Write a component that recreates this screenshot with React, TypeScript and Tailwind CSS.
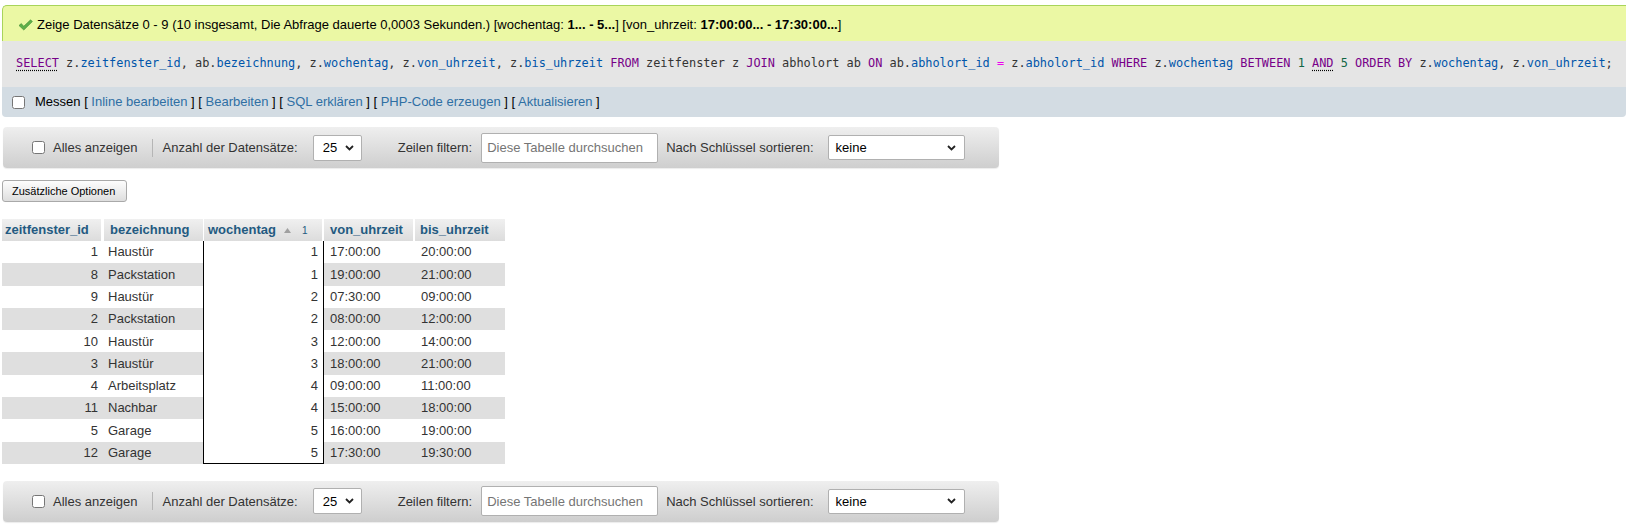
import React from "react";

const rows: [number, string, number, string, string][] = [
  [1, "Haustür", 1, "17:00:00", "20:00:00"],
  [8, "Packstation", 1, "19:00:00", "21:00:00"],
  [9, "Haustür", 2, "07:30:00", "09:00:00"],
  [2, "Packstation", 2, "08:00:00", "12:00:00"],
  [10, "Haustür", 3, "12:00:00", "14:00:00"],
  [3, "Haustür", 3, "18:00:00", "21:00:00"],
  [4, "Arbeitsplatz", 4, "09:00:00", "11:00:00"],
  [11, "Nachbar", 4, "15:00:00", "18:00:00"],
  [5, "Garage", 5, "16:00:00", "19:00:00"],
  [12, "Garage", 5, "17:30:00", "19:30:00"],
];

function Chevron() {
  return (
    <svg width="9" height="6" viewBox="0 0 9 6" className="shrink-0">
      <path d="M1 1 L4.5 4.5 L8 1" fill="none" stroke="#222" strokeWidth="1.8" />
    </svg>
  );
}

function NavBar() {
  return (
    <div className="ml-[3px] w-[996px] h-[41px] rounded-[4px] bg-gradient-to-b from-[#efefef] to-[#cecece] flex items-center text-[13px] text-[#333] shadow-[0_1px_1px_rgba(0,0,0,0.08)]">
      <input type="checkbox" className="ml-[29px] w-[13px] h-[13px]" />
      <span className="ml-[8px]">Alles anzeigen</span>
      <div className="ml-[14px] w-px h-[18px] bg-[#b5b5b5]" />
      <span className="ml-[10px]">Anzahl der Datensätze:</span>
      <div className="ml-[15px] w-[49px] h-[26px] bg-white border border-[#b0b0b0] rounded-[2px] flex items-center justify-between pl-[9px] pr-[7px] text-black">
        <span>25</span>
        <Chevron />
      </div>
      <span className="ml-[36px]">Zeilen filtern:</span>
      <div className="ml-[9px] w-[177px] h-[30px] bg-white border border-[#b0b0b0] rounded-[2px] flex items-center pl-[5px] text-[#757575]">
        Diese Tabelle durchsuchen
      </div>
      <span className="ml-[8px]">Nach Schlüssel sortieren:</span>
      <div className="ml-[14px] w-[137px] h-[25px] bg-white border border-[#b0b0b0] rounded-[2px] flex items-center justify-between pl-[7px] pr-[8px] text-black">
        <span>keine</span>
        <Chevron />
      </div>
    </div>
  );
}

const K = "text-[#770088]";
const V = "text-[#0055aa]";
const N = "text-[#116644]";

export default function App() {
  return (
    <div className="w-[1626px] h-[526px] bg-white pt-[5px] font-['Liberation_Sans',Arial,sans-serif] text-[13px] text-[#333] overflow-hidden">
      {/* success message */}
      <div className="ml-[2px] h-[36px] border-t border-l border-[#a8d45a] rounded-tl-[5px] bg-[#ebf8a4] flex items-center pl-[15px] pt-[2px] text-black">
        <svg width="15" height="12" viewBox="0 0 15 12" className="mr-[4px] shrink-0">
          <path d="M1 6.5 L3.2 4.6 L5.8 7.2 L12.6 0.8 L14.4 2.6 L5.8 11 Z" fill="#5fb04a" stroke="#3f8a32" strokeWidth="0.6" />
        </svg>
        <span>
          Zeige Datensätze 0 - 9 (10 insgesamt, Die Abfrage dauerte 0,0003 Sekunden.) [wochentag: <b>1... - 5...</b>] [von_uhrzeit: <b>17:00:00... - 17:30:00...</b>]
        </span>
      </div>
      {/* SQL */}
      <div className="ml-[2px] h-[46px] bg-[#e5e5e5] flex items-center pl-[14px] font-['DejaVu_Sans_Mono',monospace] text-[11.9px] text-[#333] whitespace-pre">
        <span className={`${K} underline decoration-dotted decoration-black underline-offset-[3px]`}>SELECT</span>
        <span> z.<span className={V}>zeitfenster_id</span>, ab.<span className={V}>bezeichnung</span>, z.<span className={V}>wochentag</span>, z.<span className={V}>von_uhrzeit</span>, z.<span className={V}>bis_uhrzeit</span> </span>
        <span className={K}>FROM</span>
        <span> zeitfenster z </span>
        <span className={K}>JOIN</span>
        <span> abholort ab </span>
        <span className={K}>ON</span>
        <span> ab.<span className={V}>abholort_id</span> <span className="text-[#ee00ee]">=</span> z.<span className={V}>abholort_id</span> </span>
        <span className={K}>WHERE</span>
        <span> z.<span className={V}>wochentag</span> </span>
        <span className={K}>BETWEEN</span>
        <span> <span className={N}>1</span> </span>
        <span className={`${K} underline decoration-dotted decoration-black underline-offset-[3px]`}>AND</span>
        <span> <span className={N}>5</span> </span>
        <span className={K}>ORDER BY</span>
        <span> z.<span className={V}>wochentag</span>, z.<span className={V}>von_uhrzeit</span>;</span>
      </div>
      {/* Messen bar */}
      <div className="ml-[2px] h-[30px] bg-[#d3dce3] rounded-b-[4px] flex items-center pl-[10px] text-black">
        <input type="checkbox" className="w-[13px] h-[13px]" />
        <span className="ml-[10px]">
          Messen [ <span className="text-[#2f6fa3]">Inline bearbeiten</span> ] [ <span className="text-[#2f6fa3]">Bearbeiten</span> ] [ <span className="text-[#2f6fa3]">SQL erklären</span> ] [ <span className="text-[#2f6fa3]">PHP-Code erzeugen</span> ] [ <span className="text-[#2f6fa3]">Aktualisieren</span> ]
        </span>
      </div>

      <div className="mt-[10px]">
        <NavBar />
      </div>

      {/* button */}
      <div className="mt-[12px] ml-[2px] w-[125px] h-[22px] border border-[#a9a9a9] rounded-[3px] bg-gradient-to-b from-[#fdfdfd] to-[#dedede] flex items-center pl-[9px] text-[11px] text-black">
        Zusätzliche Optionen
      </div>

      {/* table */}
      <div className="mt-[17px] ml-[2px] w-[503px]">
        <div className="flex h-[22px] text-[#235a81] font-bold">
          <div className="w-[101px] border-r-2 border-white bg-gradient-to-b from-[#f0f0f0] to-[#dcdcdc] flex items-center pl-[3px]">zeitfenster_id</div>
          <div className="w-[100px] border-l border-white bg-gradient-to-b from-[#f0f0f0] to-[#dcdcdc] flex items-center pl-[6px]">bezeichnung</div>
          <div className="w-[121px] border-l border-r-2 border-white bg-gradient-to-b from-[#f0f0f0] to-[#dcdcdc] flex items-center pl-[4px]">
            <span>wochentag</span>
            <svg width="7" height="5" viewBox="0 0 7 5" className="ml-[8px]">
              <path d="M0 5 L3.5 0 L7 5 Z" fill="#a0a0a0" />
            </svg>
            <span className="ml-[11px] text-[10px] font-normal">1</span>
          </div>
          <div className="w-[91px] border-r-2 border-white bg-gradient-to-b from-[#f0f0f0] to-[#dcdcdc] flex items-center pl-[6px]">von_uhrzeit</div>
          <div className="w-[90px] bg-gradient-to-b from-[#f0f0f0] to-[#dcdcdc] flex items-center pl-[5px]">bis_uhrzeit</div>
        </div>
        {rows.map((r, i) => (
          <div key={i} className={`flex h-[22.3px] ${i % 2 ? "bg-[#dfdfdf]" : "bg-white"}`}>
            <div className="w-[101px] flex items-center justify-end pr-[5px]">{r[0]}</div>
            <div className="w-[100px] flex items-center pl-[5px]">{r[1]}</div>
            <div className={`w-[121px] bg-white border-l border-r border-black flex items-center justify-end pr-[5px] ${i === rows.length - 1 ? "border-b" : ""}`}>{r[2]}</div>
            <div className="w-[91px] flex items-center pl-[6px]">{r[3]}</div>
            <div className="w-[90px] flex items-center pl-[6px]">{r[4]}</div>
          </div>
        ))}
      </div>

      <div className="mt-[17px]">
        <NavBar />
      </div>
    </div>
  );
}
